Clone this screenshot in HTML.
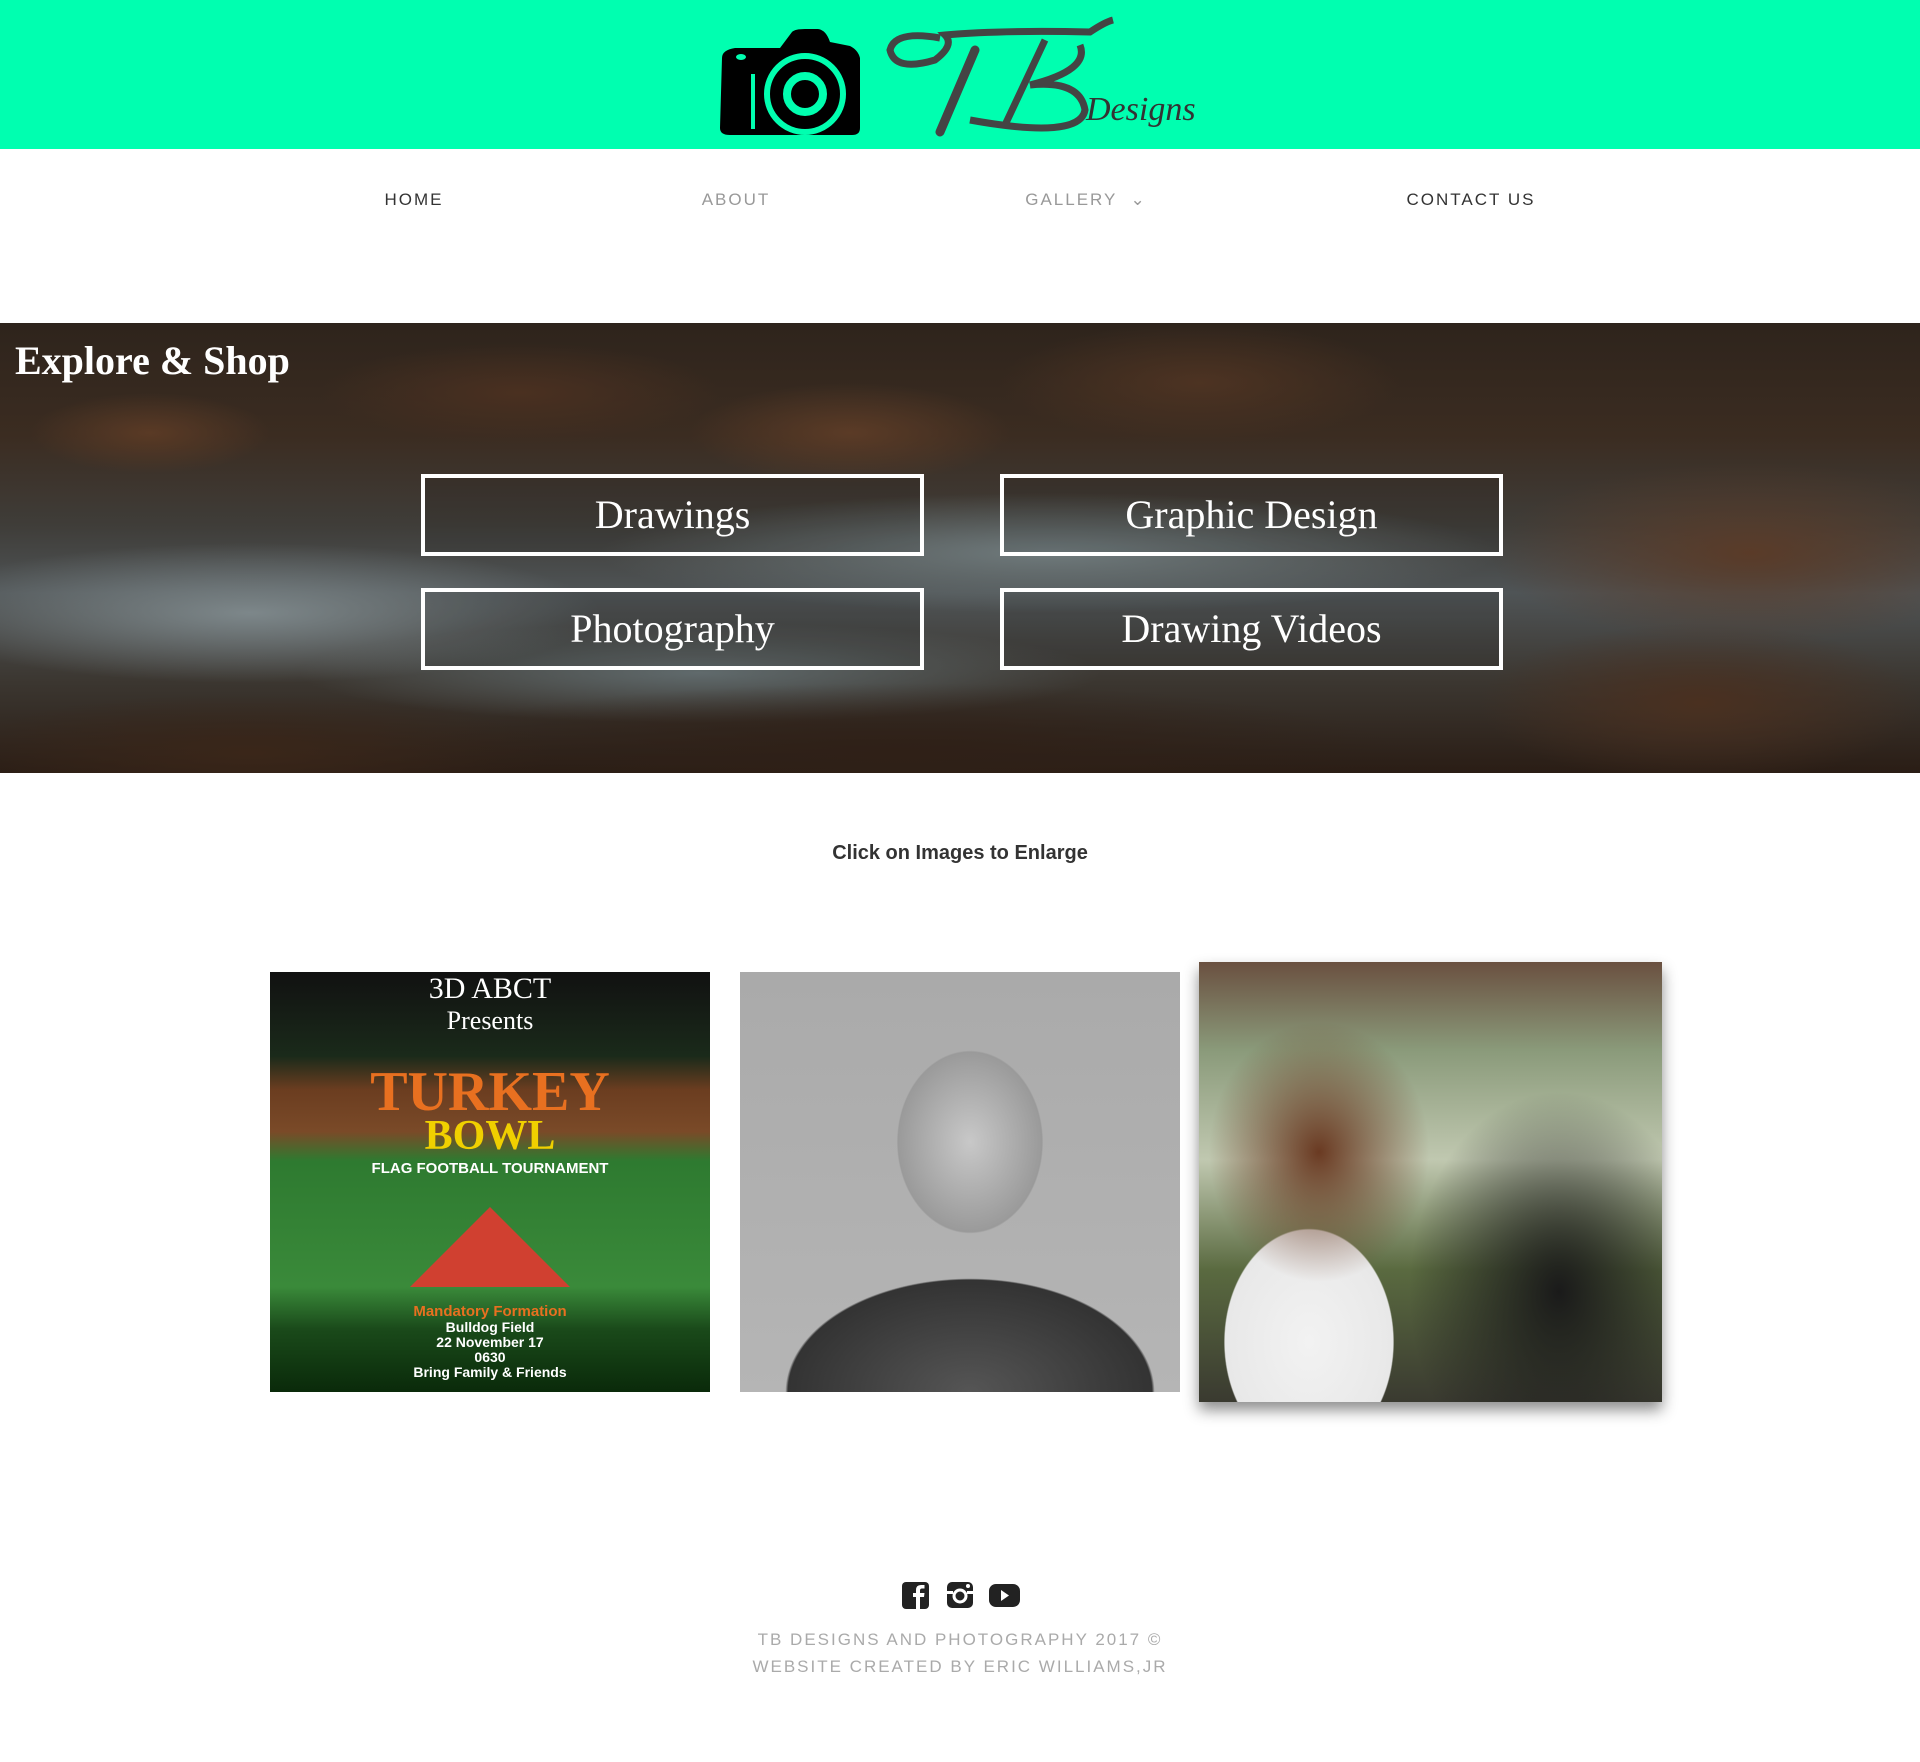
<!DOCTYPE html>
<html><head><meta charset="utf-8"><style>
*{margin:0;padding:0;box-sizing:border-box}
body{width:1920px;height:1762px;background:#fff;font-family:"Liberation Sans",sans-serif;position:relative;overflow:hidden}
.hdr{position:absolute;left:0;top:0;width:1920px;height:149px;background:#00ffb0}
.nav a{position:absolute;top:190px;font-size:17px;letter-spacing:2px;color:#333;text-decoration:none;transform:translateX(-50%)}
.hero{position:absolute;left:0;top:323px;width:1920px;height:450px;overflow:hidden;
background:
radial-gradient(ellipse 120px 40px at 150px 110px,#5a3a25,transparent),
radial-gradient(ellipse 200px 50px at 520px 70px,#4a3020,transparent),
radial-gradient(ellipse 160px 50px at 850px 110px,#5b3b26,transparent),
radial-gradient(ellipse 200px 60px at 1200px 60px,#4d3322,transparent),
radial-gradient(ellipse 260px 90px at 1750px 230px,#5a3b28,transparent),
radial-gradient(ellipse 220px 80px at 1700px 380px,#4a3020,transparent),
radial-gradient(ellipse 500px 70px at 900px 430px,#2f2017,transparent),
radial-gradient(ellipse 300px 60px at 250px 430px,#3a2619,transparent),
radial-gradient(ellipse 350px 70px at 250px 290px,#7d878a,transparent),
radial-gradient(ellipse 450px 60px at 1050px 230px,#6f7a7c,transparent),
radial-gradient(ellipse 400px 50px at 700px 350px,#606a6c,transparent),
linear-gradient(#2e241c 0%,#3b2c21 25%,#3f3d39 45%,#4f5456 60%,#3b3630 80%,#2a1d15 100%)}
.hero h1{position:absolute;left:15px;top:14px;font-family:"Liberation Serif",serif;font-weight:bold;font-size:40px;color:#fff}
.btn{position:absolute;width:503px;height:82px;border:4px solid #fff;color:#fff;font-family:"Liberation Serif",serif;font-size:40px;text-align:center;line-height:74px;background:rgba(0,0,0,.08)}
.click{position:absolute;top:842px;left:0;width:1920px;text-align:center;font-size:20px;font-weight:bold;color:#333}
.img{position:absolute;overflow:hidden}
.foot{position:absolute;left:0;width:1920px;text-align:center;color:#aaa;font-size:17px;letter-spacing:2px}
</style></head><body>
<div class="hdr">
<svg width="1920" height="149" style="position:absolute;left:0;top:0">
<path d="M722 58 Q722 50 735 48 L780 48 L792 32 Q795 29 805 29 L818 29 Q826 30 830 42 L850 46 Q858 50 860 58 L860 128 Q860 135 852 135 L730 135 Q720 135 720 128 Z" fill="#000"/>
<circle cx="805" cy="94" r="38" fill="none" stroke="#00ffb0" stroke-width="6"/>
<circle cx="805" cy="94" r="18" fill="none" stroke="#00ffb0" stroke-width="8"/>
<rect x="751" y="74" width="4" height="55" fill="#00ffb0"/>
<ellipse cx="741" cy="57" rx="5" ry="3" fill="#00ffb0"/>
<path d="M940 38 Q895 30 890 50 Q895 72 935 60 Q955 45 945 35 Q1000 30 1090 32 Q1105 22 1113 20" fill="none" stroke="#444" stroke-width="7"/>
<path d="M975 50 L940 132" stroke="#444" stroke-width="9" stroke-linecap="round"/>
<path d="M1045 40 L1005 125 M1030 85 Q1090 70 1080 45 M1030 85 Q1080 80 1085 110 Q1080 140 970 120" fill="none" stroke="#444" stroke-width="7"/>
<text x="1086" y="120" font-family="Liberation Serif,serif" font-style="italic" font-size="34" fill="#333">Designs</text>
</svg></div>
<div class="nav">
<a style="left:414px">HOME</a><a style="left:736px;color:#999">ABOUT</a><a style="left:1086px;color:#999">GALLERY &nbsp;⌄</a><a style="left:1471px">CONTACT US</a>
</div>
<div class="hero"><h1>Explore &amp; Shop</h1>
<div class="btn" style="left:421px;top:151px">Drawings</div>
<div class="btn" style="left:1000px;top:151px">Graphic Design</div>
<div class="btn" style="left:421px;top:265px">Photography</div>
<div class="btn" style="left:1000px;top:265px">Drawing Videos</div>
</div>
<div class="click">Click on Images to Enlarge</div>
<div class="img" style="left:270px;top:972px;width:440px;height:420px;background:linear-gradient(#111 0%,#1a2a1a 20%,#6b3d20 28%,#7a4a28 38%,#2e7a30 45%,#3a8a3a 75%,#1a4a1a 85%,#0a2a0a 100%)">
<div style="color:#fff;font-family:'Liberation Serif',serif;font-size:30px;text-align:center;margin-top:0">3D ABCT</div>
<div style="color:#fff;font-family:'Liberation Serif',serif;font-size:26px;text-align:center">Presents</div>
<div style="color:#e87020;font-family:'Liberation Serif',serif;font-weight:bold;font-size:56px;text-align:center;margin-top:24px">TURKEY</div>
<div style="color:#f0d000;font-family:'Liberation Serif',serif;font-weight:bold;font-size:42px;text-align:center;margin-top:-12px">BOWL</div>
<div style="color:#fff;font-weight:bold;font-size:15px;text-align:center">FLAG FOOTBALL TOURNAMENT</div>
<div style="width:0;height:0;margin:30px auto 0;border-left:80px solid transparent;border-right:80px solid transparent;border-bottom:80px solid #d04030"></div>
<div style="color:#e87020;font-weight:bold;font-size:15px;text-align:center;margin-top:16px">Mandatory Formation</div>
<div style="color:#fff;font-weight:bold;font-size:14px;text-align:center;line-height:15px">Bulldog Field<br>22 November 17<br>0630<br>Bring Family &amp; Friends</div>
</div>
<div class="img" style="left:740px;top:972px;width:440px;height:420px;background:radial-gradient(ellipse 120px 150px at 230px 170px,#c8c8c8,#9a9a9a 60%,transparent 61%),radial-gradient(ellipse 260px 160px at 230px 420px,#555,#333 70%,transparent 71%),linear-gradient(#aaa,#b5b5b5)"></div>
<div class="img" style="left:1199px;top:962px;width:463px;height:440px;box-shadow:0 8px 14px rgba(0,0,0,.45);background:radial-gradient(ellipse 110px 130px at 120px 190px,#6a3a22,transparent),radial-gradient(ellipse 150px 200px at 360px 330px,#1a1a1a,transparent),radial-gradient(ellipse 120px 160px at 110px 380px,#f2f2f2,#e8e8e8 70%,transparent 71%),linear-gradient(#6a5040 0%,#8a9a7a 20%,#c0c8b0 45%,#5a6a40 70%,#3a3a30 100%)"></div>
<svg width="130" height="32" style="position:absolute;left:900px;top:1580px">
<rect x="2" y="2" width="27" height="27" rx="4" fill="#222"/><path d="M20 29 V17 H24 L24.5 13 H20 V10.5 Q20 8.5 22 8.5 H24.5 V5 H21 Q16 5 16 10 V13 H13 V17 H16 V29 Z" fill="#fff"/>
<rect x="47" y="2" width="26" height="26" rx="5" fill="#222"/><circle cx="60" cy="16" r="6" fill="none" stroke="#fff" stroke-width="3"/><rect x="47" y="11" width="6" height="3" fill="#fff"/><rect x="67" y="11" width="6" height="3" fill="#fff"/><circle cx="68" cy="6" r="2" fill="#fff"/>
<rect x="89" y="4" width="31" height="23" rx="7" fill="#222"/><path d="M101 10 L109 15.5 L101 21 Z" fill="#fff"/>
</svg>
<div class="foot" style="top:1630px">TB DESIGNS AND PHOTOGRAPHY 2017 ©</div>
<div class="foot" style="top:1657px">WEBSITE CREATED BY ERIC WILLIAMS,JR</div>
</body></html>
